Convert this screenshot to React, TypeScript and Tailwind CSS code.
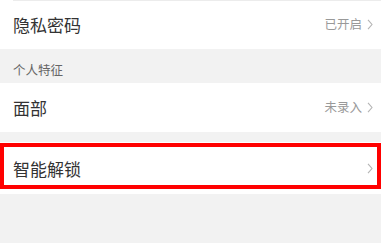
const font = { fontFamily: '"Noto Sans CJK SC", "Noto Sans", sans-serif' }

function Chevron() {
  return (
    <svg width="6" height="11" viewBox="0 0 6 11" className="ml-[5px]">
      <polyline points="1,0.8 5,5.5 1,10.2" fill="none" stroke="#b4b4b4" strokeWidth="1.1" />
    </svg>
  )
}

function Row({ label, value }: { label: string; value?: string }) {
  return (
    <div className="flex h-full items-center justify-between bg-white pl-[13px] pr-[8px]">
      <span className="text-[17px] leading-none text-[#333]">{label}</span>
      <div className="flex items-center">
        {value && <span className="text-[12.5px] leading-none text-[#999]">{value}</span>}
        <Chevron />
      </div>
    </div>
  )
}

export default function App() {
  return (
    <div className="flex h-[243px] w-[381px] flex-col bg-[#f2f2f2]" style={font}>
      {/* 隐私密码 */}
      <div className="relative h-[49px] bg-white">
        <div className="absolute left-[13px] right-0 top-0 h-px bg-[#ececec]" />
        <Row label="隐私密码" value="已开启" />
      </div>

      {/* section header */}
      <div className="flex h-[34px] items-center pl-[13px] pt-[8px]">
        <span className="text-[12.5px] leading-none text-[#666]">个人特征</span>
      </div>

      {/* 面部 */}
      <div className="h-[49px]">
        <Row label="面部" value="未录入" />
      </div>

      <div className="h-[10px]" />

      {/* 智能解锁 - highlighted */}
      <div className="relative h-[52px]">
        <Row label="智能解锁" />
        <div className="absolute left-0 right-0 top-[1px] h-[46px] border-4 border-[#ff0000]" />
      </div>
    </div>
  )
}
